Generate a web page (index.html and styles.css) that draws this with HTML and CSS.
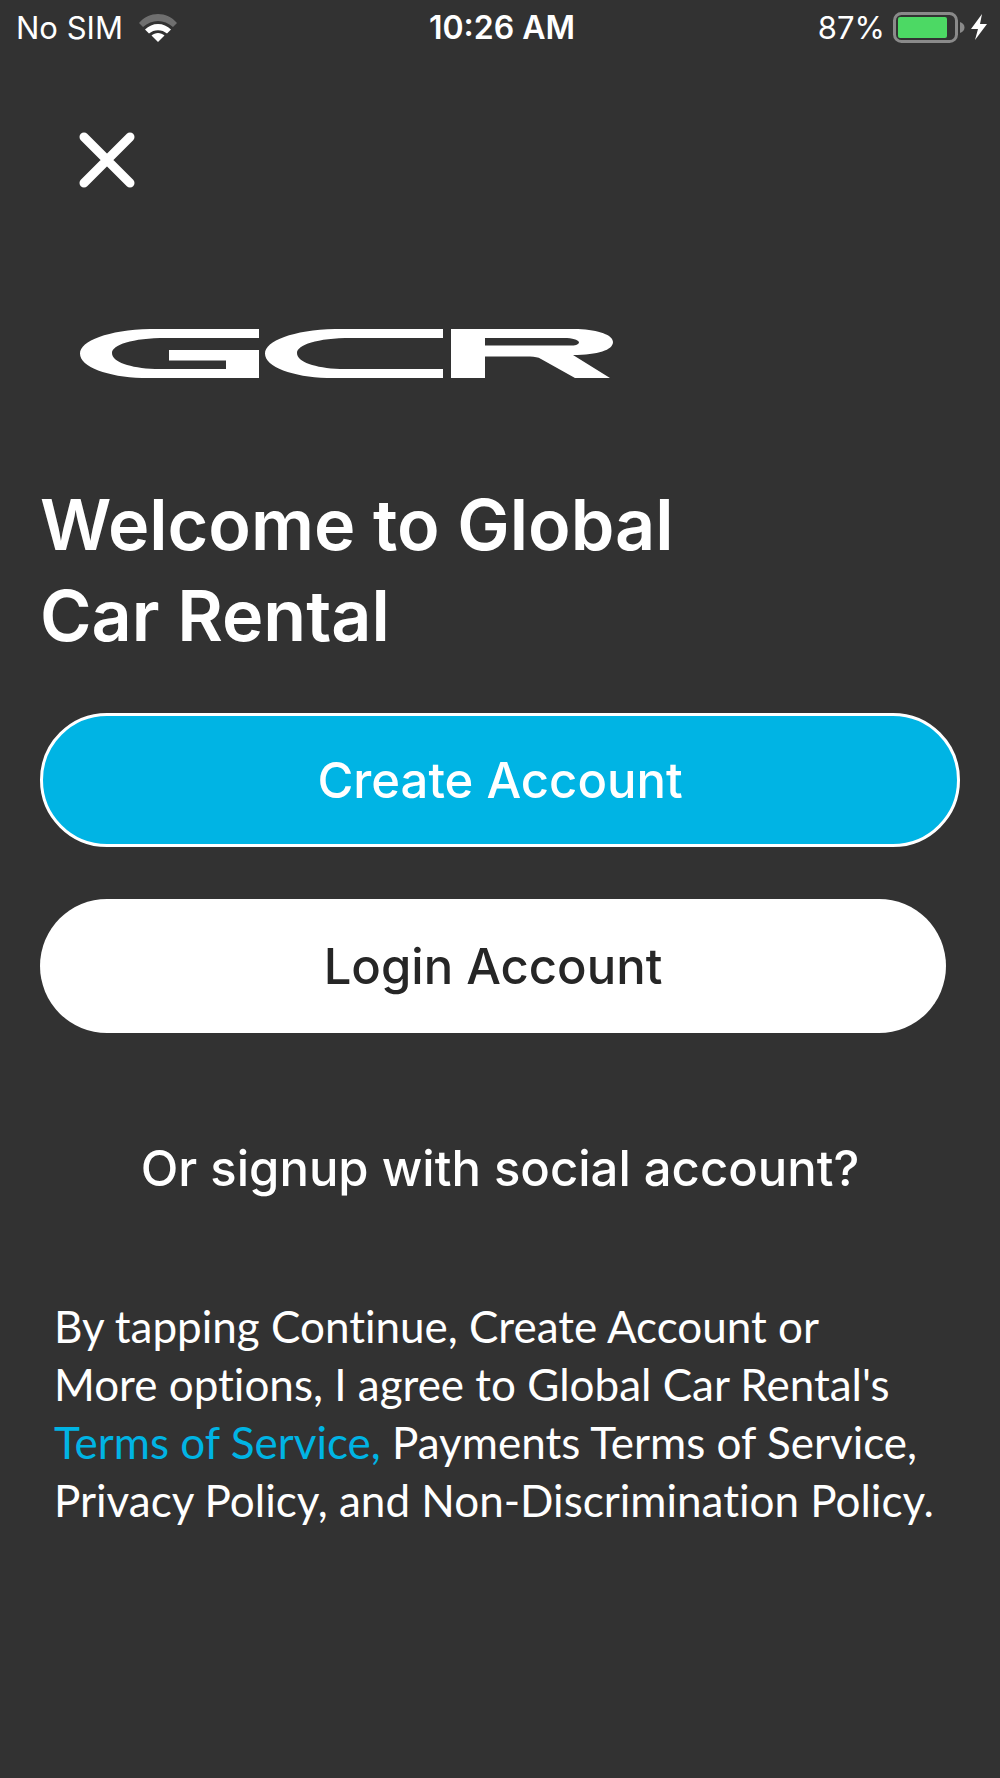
FILE: index.html
```html
<!DOCTYPE html>
<html lang="en">
  <head>
    <meta charset="UTF-8" />
    <meta name="viewport" content="width=device-width, initial-scale=1.0" />
    <title>Global Car Rental</title>
    <link rel="stylesheet" href="styles.css">
  </head>
  <body>
    <div class="status-bar">
      <div class="status-left">
        <span>No SIM</span>
        <svg width="38" height="28" viewBox="0 0 38 28">
          <path fill="#6f6f6f" d="M0 9C10-3 28-3 38 9L34 13C25 5 13 5 4 13Z" />
          <path fill="#fff" d="M6 15.500C13 8 25 8 32 15.500L28 19.500C23 15 15 15 10 19.500Z" />
          <path fill="#fff" d="M12.500 21.500C16 18 22 18 25.500 21.500L19 28Z" />
        </svg>
      </div>
      <div class="status-time">10:26 AM</div>
      <div class="status-right">
        <span>87%</span>
        <svg width="95" height="32" viewBox="0 0 95 32">
          <rect x="1.500" y="1.500" width="62" height="28" rx="7" fill="none" stroke="#8a8a8a" stroke-width="3" />
          <rect x="5" y="5" width="49" height="21" rx="2" fill="#4cd964" />
          <path fill="#8a8a8a" d="M67 10C73 12 73 19 67 21Z" />
          <path fill="#fff" d="M89 2L78 17H85L82 28L94 12H87Z" />
        </svg>
      </div>
    </div>

    <main class="welcome">
      <button class="close" type="button" aria-label="Close">
        <svg width="56" height="56" viewBox="0 0 56 56">
          <path d="M5 5L51 51M51 5L5 51" stroke="#fff" stroke-width="9" stroke-linecap="round" />
        </svg>
      </button>

      <svg class="logo" width="533" height="49" viewBox="80 329 533 49" role="img" aria-label="GCR">
        <g fill="#fff">
          <path d="M259 329H150C108 330 80 341 80 353.500C80 367 108 377 142 378H259V350H169V360.500H226V369H155C130 368 112 362 112 353C112 345 132 338 166 338H259Z" />
          <path d="M443 329H335C293 330 265 341 265 353.500C265 367 293 377 327 378H443V369H340C315 368 297 362 297 353C297 345 317 338 351 338H443Z" />
          <path fill-rule="evenodd" d="M451 329H578C599 330 613 335 613 342C613 350 598 355 573 355L610 378H575L541 359C538 357 535 357 530 356.500H485V378H451ZM485 338V345.500H572C582 345 582 339 567 338Z" />
        </g>
      </svg>

      <h1>Welcome to Global<br>Car Rental</h1>

      <button class="btn btn-create" type="button">Create Account</button>
      <button class="btn btn-login" type="button">Login Account</button>

      <p class="social">Or signup with social account?</p>

      <p class="terms">
        By tapping Continue, Create Account or<br>
        More options, I agree to Global Car Rental's<br>
        <a href="#">Terms of Service,</a> Payments Terms of Service,<br>
        Privacy Policy, and Non-Discrimination Policy.
      </p>
    </main>
  </body>
</html>
```
FILE: styles.css
```css
* {
  box-sizing: border-box;
}

body {
  margin: 0;
  min-height: 100vh;
  background-color: #323232;
  color: #fff;
  font-family: Inter, "Liberation Sans", sans-serif;
}

.status-bar {
  display: grid;
  grid-template-columns: 1fr auto 1fr;
  align-items: center;
  height: 55px;
  padding: 0 12px 0 16px;
  font-size: 31px;
}

.status-left,
.status-right {
  display: flex;
  align-items: center;
  gap: 16px;
}

.status-right {
  justify-content: flex-end;
  gap: 8px;
}

.status-time {
  font-size: 32px;
  font-weight: 600;
}

.welcome {
  display: flex;
  flex-direction: column;
  padding: 77px 40px 80px;
}

.close {
  display: flex;
  align-self: flex-start;
  margin-left: 39px;
  padding: 0;
  border: 0;
  background: none;
  cursor: pointer;
}

.logo {
  margin: 141px 0 0 40px;
}

h1 {
  margin: 101px 0 0;
  font-size: 70px;
  font-weight: 600;
  line-height: 91px;
}

.btn {
  height: 134px;
  padding: 0;
  border: 0;
  border-radius: 67px;
  font-family: inherit;
  font-size: 49px;
  font-weight: 500;
  cursor: pointer;
}

.btn-create {
  margin-top: 52px;
  border: 3px solid #fff;
  background-color: #00b4e4;
  color: #fff;
}

.btn-login {
  margin: 52px 14px 0 0;
  background-color: #fff;
  color: #262626;
}

.social {
  margin: 106px 0 0;
  font-size: 49px;
  font-weight: 500;
  line-height: 60px;
  text-align: center;
}

.terms {
  margin: 98px 0 0;
  padding-left: 14px;
  font-family: Lato, "Liberation Sans", sans-serif;
  font-size: 44px;
  font-variant-ligatures: none;
  line-height: 58px;
  white-space: nowrap;
}

.terms a {
  color: #00b4e4;
  text-decoration: none;
}
```
